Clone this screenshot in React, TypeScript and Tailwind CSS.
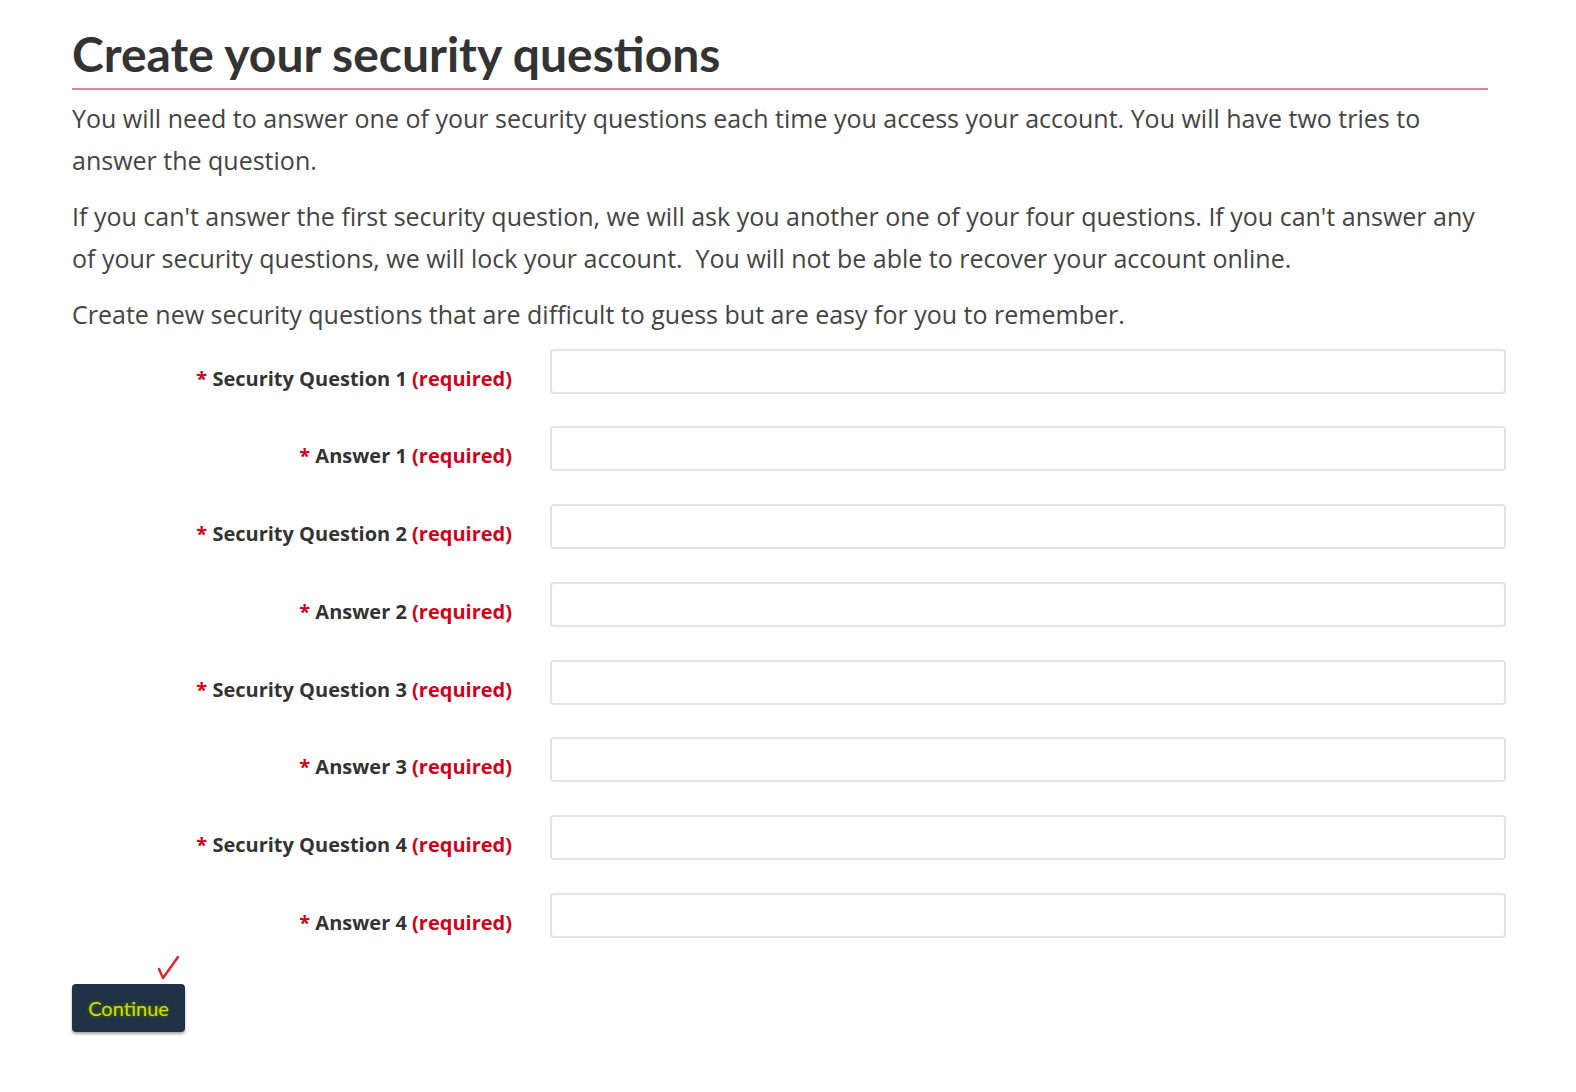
const FIELDS = [
  'Security Question 1',
  'Answer 1',
  'Security Question 2',
  'Answer 2',
  'Security Question 3',
  'Answer 3',
  'Security Question 4',
  'Answer 4',
]

export default function App() {
  return (
    <div className="min-h-screen bg-white text-[#3b3b3b]" style={{ fontFamily: '"Open Sans", sans-serif' }}>
      <div className="pl-[72px] pt-[26px] w-[1540px]">
        <h1
          className="text-[48px] font-bold leading-[56px] text-[#333333]"
          style={{ fontFamily: 'Lato, sans-serif' }}
        >
          Create your security questions
        </h1>
        <div className="w-[1416px] h-[2px] bg-[#d98a91] mt-[6px]" />

        <div className="w-[1416px] text-[25px] leading-[41.5px] text-[#444444] mt-[8px]">
          <p>
            You will need to answer one of your security questions each time you access your account. You will have two
            tries to answer the question.
          </p>
          <p className="mt-[15px]">
            If you can't answer the first security question, we will ask you another one of your four questions. If you
            can't answer any of your security questions, we will lock your account.&nbsp; You will not be able to recover
            your account online.
          </p>
          <p className="mt-[15px]">
            Create new security questions that are difficult to guess but are easy for you to remember.
          </p>
        </div>

        <form className="mt-[13px] flex flex-col gap-[32.8px]">
          {FIELDS.map((f) => (
            <div key={f} className="flex items-start gap-[38px]">
              <label className="w-[440px] shrink-0 pt-[16px] leading-[28px] text-right text-[20px] font-bold text-[#333333]">
                <span className="text-[#d0021b]">* </span>
                {f} <span className="text-[#d0021b]">(required)</span>
              </label>
              <input
                type="text"
                className="w-[956px] shrink-0 h-[45px] rounded-[4px] border-2 border-[#e3e3e3] bg-white outline-none"
              />
            </div>
          ))}
        </form>

        <div className="relative mt-[46px] w-fit">
          <svg
            className="absolute left-[84px] top-[-31px]"
            width="26"
            height="28"
            viewBox="0 0 26 28"
            fill="none"
            stroke="#e5242a"
            strokeWidth={2.5}
            strokeLinecap="round"
            strokeLinejoin="round"
          >
            <path d="M3 16 L7 25 L22 4" />
          </svg>
          <button
            type="button"
            className="w-[113px] h-[48px] rounded-[4px] bg-[#1f3146] shadow-[0_2px_3px_rgba(0,0,0,0.35)] text-[20px] text-[#c8e000]"
            style={{ fontFamily: 'Lato, sans-serif', textShadow: '0 0 4px #5a6b00, 0 0 2px #5a6b00' }}
          >
            Continue
          </button>
        </div>
      </div>
    </div>
  )
}
